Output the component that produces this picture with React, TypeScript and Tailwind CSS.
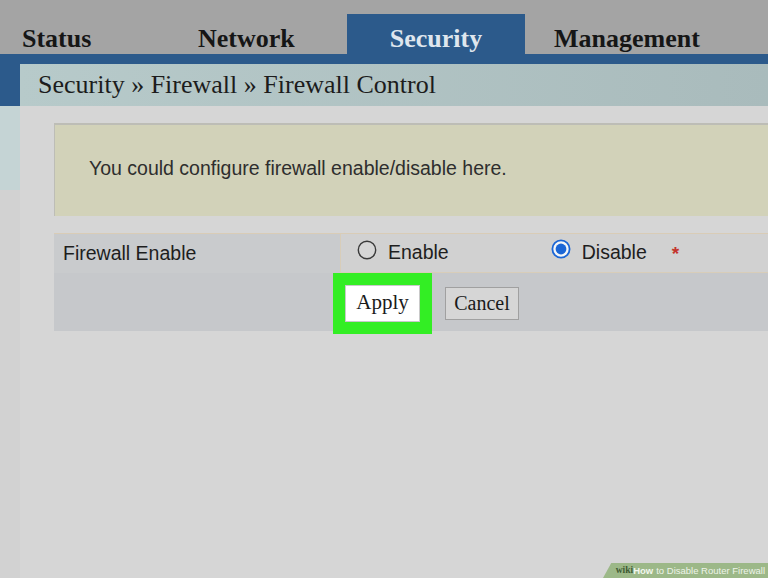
import React from "react";

const serif = { fontFamily: '"Liberation Serif", "Times New Roman", serif' };
const sans = { fontFamily: '"Liberation Sans", Arial, sans-serif' };

function Radio({ checked }: { checked: boolean }) {
  return checked ? (
    <svg width="20" height="20" viewBox="0 0 20 20" className="shrink-0">
      <circle cx="10" cy="10" r="8.6" fill="#f4f6f8" stroke="#1b66d6" strokeWidth="1.8" />
      <circle cx="10" cy="10" r="5.4" fill="#1b66d6" />
    </svg>
  ) : (
    <svg width="20" height="20" viewBox="0 0 20 20" className="shrink-0">
      <circle cx="10" cy="10" r="8.7" fill="#d6d6d6" stroke="#3a3a3a" strokeWidth="1.4" />
    </svg>
  );
}

export default function App() {
  return (
    <div className="relative flex h-[578px] w-[768px] flex-col overflow-hidden bg-[#d5d5d5]">
      {/* top tabs */}
      <div className="flex h-[54px] shrink-0 items-end bg-[#a4a4a4]" style={serif}>
        <div className="h-[40px] w-[198px] pl-[22px] pt-[12px] text-[26px] font-bold leading-[26px] text-[#161616]">
          Status
        </div>
        <div className="h-[40px] w-[149px] pt-[12px] text-[26px] font-bold leading-[26px] text-[#161616]">
          Network
        </div>
        <div className="h-[40px] w-[178px] bg-[#2c5a8b] pt-[12px] text-center text-[26px] font-bold leading-[26px] text-[#dfe6ee]">
          Security
        </div>
        <div className="h-[40px] pl-[29px] pt-[12px] text-[26px] font-bold leading-[26px] text-[#161616]">
          Management
        </div>
      </div>

      {/* blue band + breadcrumb */}
      <div className="h-[52px] shrink-0 bg-[#2c5a8b] pl-[20px] pt-[10px]">
        <div
          className="h-[42px] bg-gradient-to-r from-[#b7caca] to-[#a9bbbc] pl-[18px] pt-[8px] text-[26px] leading-[26px] text-[#1c1c1c]"
          style={serif}
        >
          Security » Firewall » Firewall Control
        </div>
      </div>

      {/* body */}
      <div className="flex flex-1">
        <div className="w-[20px] shrink-0 bg-[#d2d2d2]">
          <div className="h-[84px] bg-[#c5d4d5]" />
        </div>
        <div className="flex-1 bg-[#d6d6d6] pl-[34px] pt-[17px]">
          <div
            className="flex h-[93px] items-center border-l border-t-2 border-[#bdbdb6] bg-[#d2d2b9] pb-[3px] pl-[34px] text-[19.5px] text-[#2e2e2e]"
            style={sans}
          >
            You could configure firewall enable/disable here.
          </div>

          <div className="mt-[17px]" style={sans}>
            <div className="flex h-[40px] border-t border-[#d9ccb6]">
              <div className="flex w-[286px] items-center bg-[#c9cbcd] pl-[9px] text-[19.5px] text-[#1e1e1e]">
                Firewall Enable
              </div>
              <div className="flex flex-1 items-center border-b border-l border-[#d8cdb9] bg-[#d1d1d1] pl-[16px] text-[19.5px] text-[#1e1e1e]">
                <div className="mt-[-6px]">
                  <Radio checked={false} />
                </div>
                <span className="ml-[11px]">Enable</span>
                <div className="ml-[102px] mt-[-9px]">
                  <Radio checked={true} />
                </div>
                <span className="ml-[11px]">Disable</span>
                <span className="ml-[25px] mt-[2px] text-[19px] font-bold text-[#c4342c]">*</span>
              </div>
            </div>
            <div className="flex h-[58px] items-center bg-[#c6c8cb] pl-[291px] pt-[2px]" style={serif}>
              <button
                className="flex h-[37px] w-[75px] items-center justify-center border border-[#c9c9c9] bg-white text-[21px] text-[#1a1a1a] shadow-[0_0_0_12px_#33ee24]"
                style={serif}
              >
                Apply
              </button>
              <button
                className="ml-[25px] flex h-[33px] w-[74px] items-center justify-center border border-[#a0a0a0] bg-[#d6d6d6] text-[20px] text-[#1a1a1a]"
                style={serif}
              >
                Cancel
              </button>
            </div>
          </div>
        </div>
      </div>

      {/* watermark */}
      <div
        className="absolute bottom-0 right-0 flex h-[15px] w-[165px] items-center justify-end whitespace-nowrap bg-[#9cb888] pr-[3px] text-[9.5px] font-bold leading-none [clip-path:polygon(5%_0,100%_0,100%_100%,0_100%)]"
        style={sans}
      >
        <span className="text-[#3f5a32]" style={serif}>wiki</span>
        <span className="text-[#f2f7ee]">How</span>
        <span className="ml-[3px] font-normal text-[#eef4ea]">to Disable Router Firewall</span>
      </div>
    </div>
  );
}
